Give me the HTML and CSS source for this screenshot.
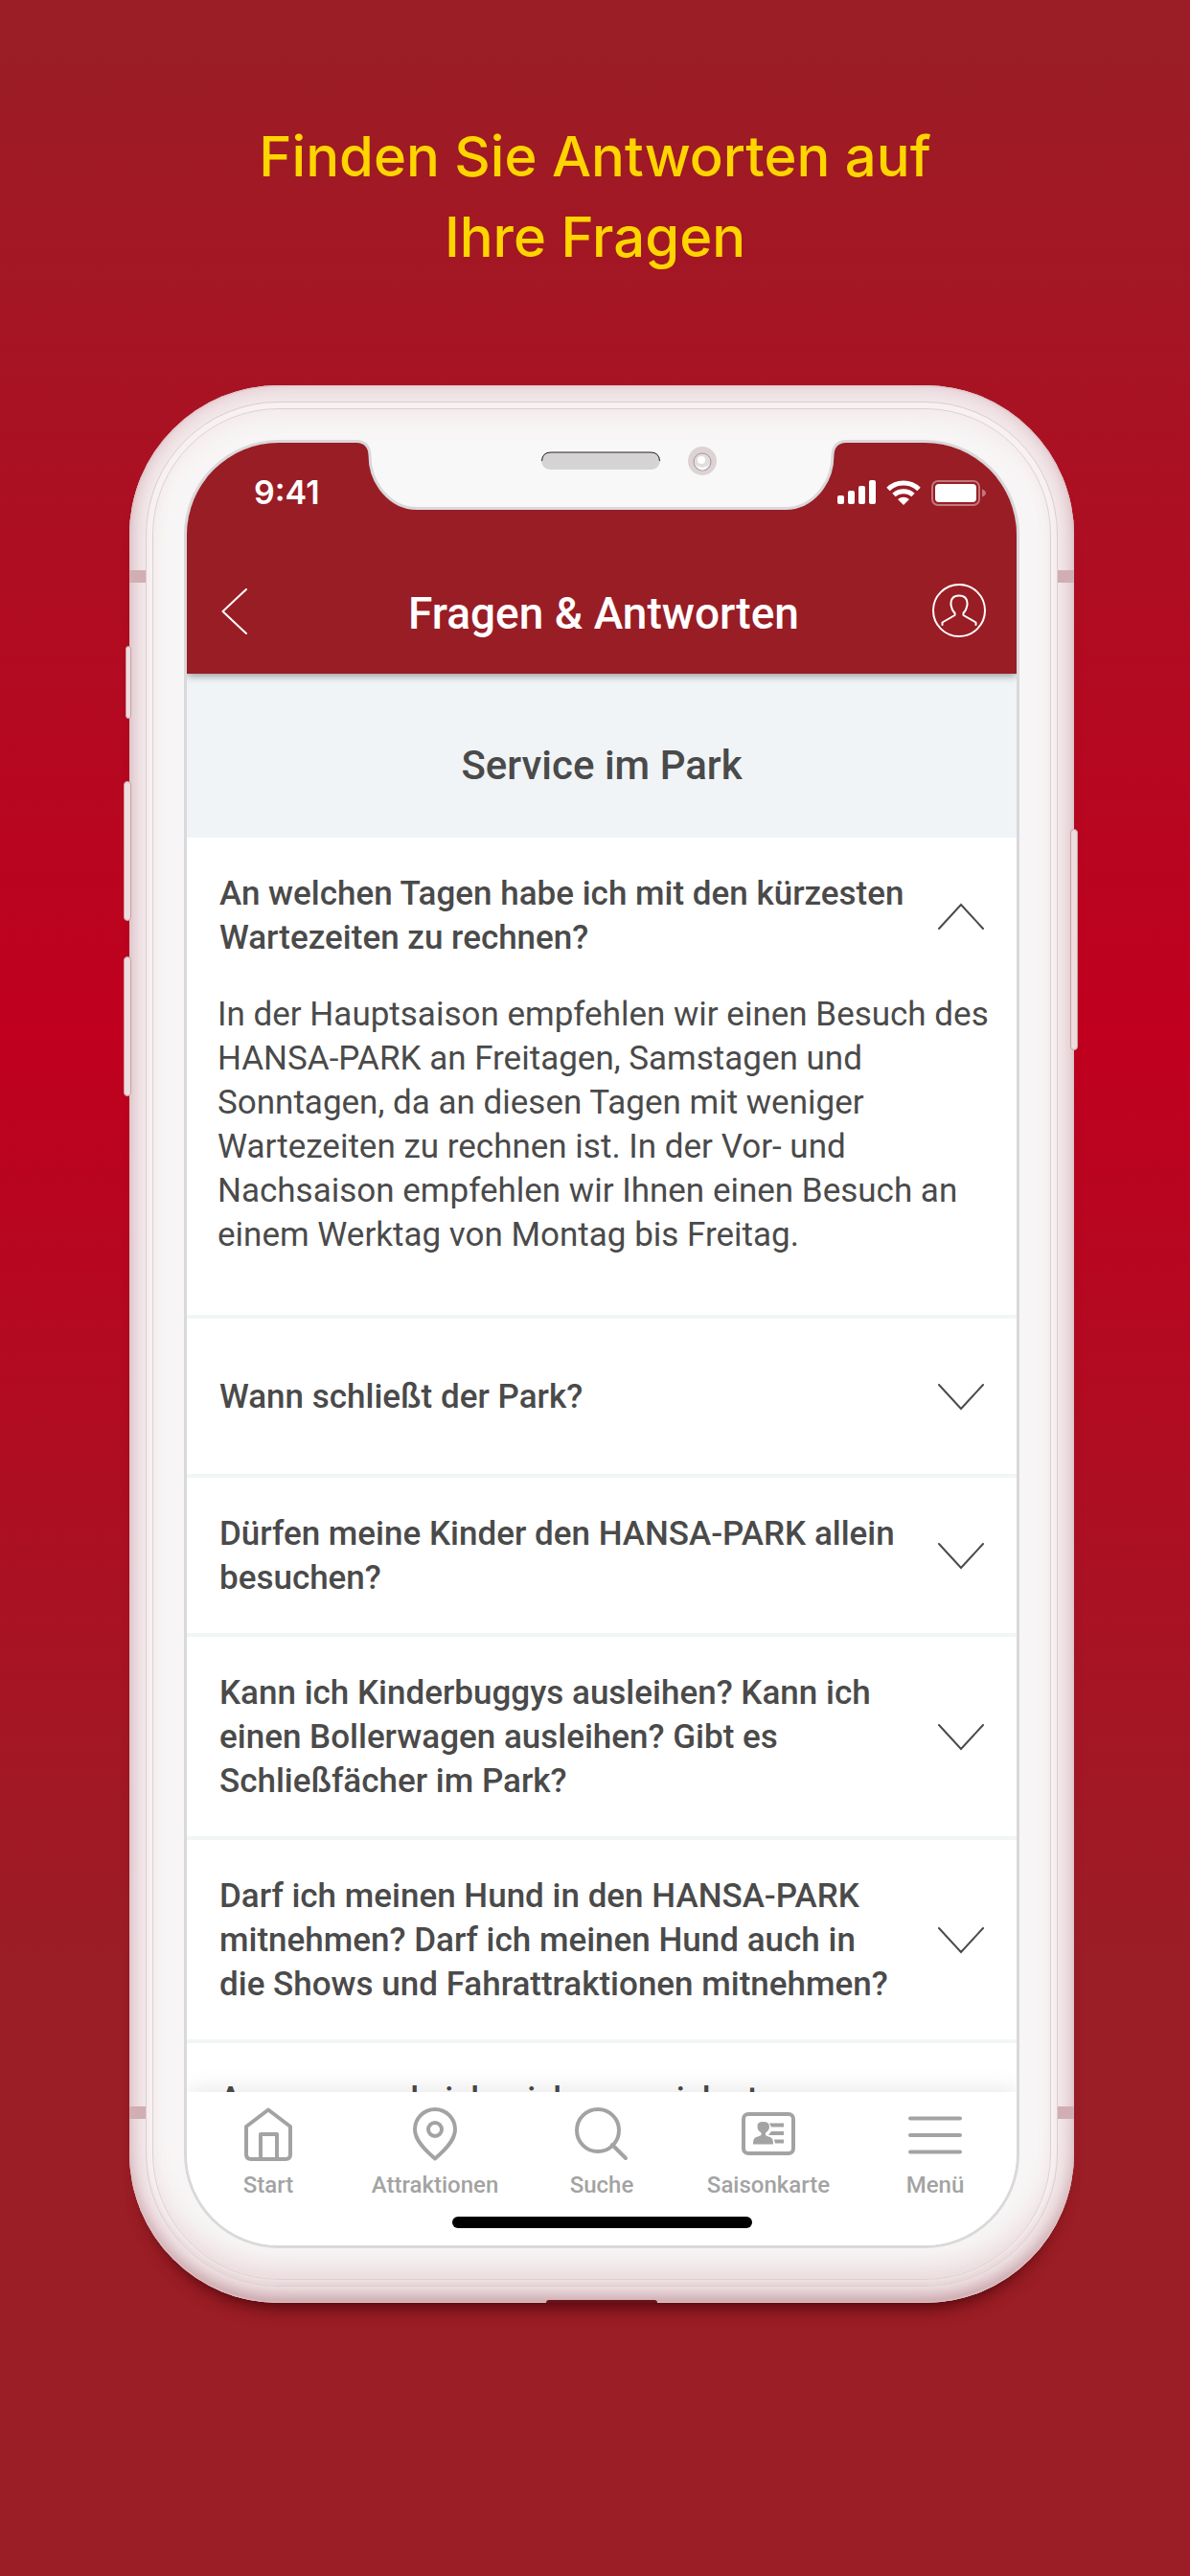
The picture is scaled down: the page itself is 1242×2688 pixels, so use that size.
FILE: index.html
```html
<!DOCTYPE html>
<html lang="de">
<head>
    <meta charset="UTF-8">
    <meta name="viewport" content="width=device-width, initial-scale=1">
    <title>Fragen &amp; Antworten</title>
    <link rel="stylesheet" href="styles.css">
</head>
<body>
    <h1 class="claim">Finden Sie Antworten auf<br>Ihre Fragen</h1>

    <main class="stage">
        <div class="phone">
            <!-- side keys -->
            <span class="key key_mute"></span>
            <span class="key key_up"></span>
            <span class="key key_down"></span>
            <span class="key key_power"></span>
            <!-- antenna bands -->
            <span class="band band_tl"></span>
            <span class="band band_tr"></span>
            <span class="band band_bl"></span>
            <span class="band band_br"></span>
            <span class="groove"></span>

            <div class="rim">
                <div class="bezel">
                    <div class="screen">
                        <header class="header">
                            <div class="status">
                                <span class="clock">9:41</span>
                                <span class="signals">
                                    <svg width="40" height="26" viewBox="0 0 40 26" fill="#fff">
                                        <rect x="0" y="16" width="7" height="9" rx="2"/>
                                        <rect x="11" y="11" width="7" height="14" rx="2"/>
                                        <rect x="22" y="6" width="7" height="19" rx="2"/>
                                        <rect x="33" y="0" width="7" height="25" rx="2"/>
                                    </svg>
                                    <svg width="36" height="26" viewBox="0 0 36 26" fill="none" stroke="#fff" stroke-width="5">
                                        <path d="M2 9.5A23 23 0 0 1 34 9.5"/>
                                        <path d="M8 15.5A15 15 0 0 1 28 15.5"/>
                                        <path d="M12 20Q18 15.500 24 20L18 26Z" fill="#fff" stroke="none"/>
                                    </svg>
                                    <svg width="57" height="27" viewBox="0 0 57 27">
                                        <rect x="1" y="1" width="49" height="25" rx="6" fill="none" stroke="#fff" stroke-opacity=".4" stroke-width="2"/>
                                        <rect x="4" y="4" width="43" height="19" rx="4" fill="#fff"/>
                                        <path d="M53 9.500Q57 11 57 13.500Q57 16 53 17.500Z" fill="#fff" fill-opacity=".4"/>
                                    </svg>
                                </span>
                            </div>
                            <div class="bar">
                                <button type="button" class="icon_btn" aria-label="Zurück">
                                    <svg width="28" height="50" viewBox="0 0 28 50" fill="none" stroke="#fff" stroke-width="2" stroke-linecap="round" stroke-linejoin="round">
                                        <path d="M26 3L1.500 26L26 49"/>
                                    </svg>
                                </button>
                                <h2 class="bar_title">Fragen &amp; Antworten</h2>
                                <button type="button" class="icon_btn" aria-label="Profil">
                                    <svg width="56" height="56" viewBox="0 0 56 56" fill="none" stroke="#fff" stroke-width="2" stroke-linecap="round" stroke-linejoin="round">
                                        <circle cx="28" cy="28" r="27"/>
                                        <path d="M10.500 43V40.500L23.500 33V30.500C20.500 28 20 25 19.500 22C19 16 22 12.500 28 12.500S37 16 36.500 22C36 25 35.500 28 32.500 30.500V33L45.500 40.500V43"/>
                                    </svg>
                                </button>
                            </div>
                        </header>

                        <div class="content">
                            <h3 class="section_title">Service im Park</h3>

                            <details class="faq" open>
                                <summary>
                                    <span class="question">An welchen Tagen habe ich mit den kürzesten Wartezeiten zu rechnen?</span>
                                    <svg class="chevron" width="48" height="28" viewBox="0 0 48 28"><path d="M1 1L24 26L47 1"/></svg>
                                </summary>
                                <p class="answer">In der Hauptsaison empfehlen wir einen Besuch des HANSA-PARK an Freitagen, Samstagen und Sonntagen, da an diesen Tagen mit weniger Wartezeiten zu rechnen ist. In der Vor- und Nachsaison empfehlen wir Ihnen einen Besuch an einem Werktag von Montag bis Freitag.</p>
                            </details>
                            <details class="faq">
                                <summary>
                                    <span class="question">Wann schließt der Park?</span>
                                    <svg class="chevron" width="48" height="28" viewBox="0 0 48 28"><path d="M1 1L24 26L47 1"/></svg>
                                </summary>
                            </details>
                            <details class="faq">
                                <summary>
                                    <span class="question">Dürfen meine Kinder den HANSA-PARK allein besuchen?</span>
                                    <svg class="chevron" width="48" height="28" viewBox="0 0 48 28"><path d="M1 1L24 26L47 1"/></svg>
                                </summary>
                            </details>
                            <details class="faq">
                                <summary>
                                    <span class="question">Kann ich Kinderbuggys ausleihen? Kann ich einen Bollerwagen ausleihen? Gibt es Schließfächer im Park?</span>
                                    <svg class="chevron" width="48" height="28" viewBox="0 0 48 28"><path d="M1 1L24 26L47 1"/></svg>
                                </summary>
                            </details>
                            <details class="faq">
                                <summary>
                                    <span class="question">Darf ich meinen Hund in den HANSA-PARK mitnehmen? Darf ich meinen Hund auch in die Shows und Fahrattraktionen mitnehmen?</span>
                                    <svg class="chevron" width="48" height="28" viewBox="0 0 48 28"><path d="M1 1L24 26L47 1"/></svg>
                                </summary>
                            </details>
                            <details class="faq">
                                <summary>
                                    <span class="question">An wen wende ich mich, wenn ich etwas verloren habe?</span>
                                    <svg class="chevron" width="48" height="28" viewBox="0 0 48 28"><path d="M1 1L24 26L47 1"/></svg>
                                </summary>
                            </details>
                        </div>

                        <footer class="footer">
                            <nav class="tabs">
                                <a href="#start">
                                    <svg width="56" height="56" viewBox="0 0 56 56">
                                        <path d="M28 2.500L51 20V49Q51 54 46 54H10Q5 54 5 49V20Z"/>
                                        <path d="M20 54V28H37V54"/>
                                    </svg>
                                    Start
                                </a>
                                <a href="#attraktionen">
                                    <svg width="56" height="56" viewBox="0 0 56 56">
                                        <path d="M28 53.500C18 45 7 34.500 7 23A21 21 0 0 1 49 23C49 34.500 38 45 28 53.500Z"/>
                                        <circle cx="28" cy="23" r="7"/>
                                    </svg>
                                    Attraktionen
                                </a>
                                <a href="#suche">
                                    <svg width="56" height="56" viewBox="0 0 56 56">
                                        <circle cx="24" cy="24" r="22"/>
                                        <path d="M39 39L53 53"/>
                                    </svg>
                                    Suche
                                </a>
                                <a href="#saisonkarte">
                                    <svg width="56" height="56" viewBox="0 0 56 56">
                                        <rect x="2" y="7" width="52" height="41" rx="5"/>
                                        <path class="solid" d="M12 38.500Q11.500 31 17 30.500L20.500 29V26.500Q16.500 24 16.500 20Q16 15 22.500 15T29 20Q29 24 25 26.500V29L28 30.500Q33.500 31 33 38.500Z"/>
                                        <path class="solid" d="M29 16.500H44V20.500H31ZM31 25H44V29H28ZM34 33.500H44V37.500H35Z"/>
                                    </svg>
                                    Saisonkarte
                                </a>
                                <a href="#menue">
                                    <svg width="56" height="56" viewBox="0 0 56 56">
                                        <path d="M2 11.500H54M2 29H54M2 46.500H54"/>
                                    </svg>
                                    Menü
                                </a>
                            </nav>
                            <div class="home_bar"></div>
                        </footer>
                    </div>

                    <svg class="notch" width="512" height="76" viewBox="0 0 512 76">
                        <path d="M1 1.500Q13.500 3 14 16C14 46 36 71.500 63 71.500H448C475 71.500 497 46 497 16Q497.500 3 510 1.500V-3H1Z" fill="#f9f8f8"/>
                        <path d="M0 1.500Q13.500 2 14 16C14 46 36 71.500 63 71.500H448C475 71.500 497 46 497 16Q497.500 2 511 1.500" fill="none" stroke="#d9d8da" stroke-width="3"/>
                        <!-- speaker -->
                        <rect x="193" y="13" width="124" height="18" rx="9" fill="#d6d3d4"/>
                        <path d="M193.500 22Q194 13 203 13H307Q316 13 316.500 22" fill="none" stroke="#222" stroke-width="1"/>
                        <!-- camera -->
                        <circle cx="361" cy="22" r="15" fill="#ddd2d4"/>
                        <circle cx="361" cy="23" r="9" fill="#e3dddd" stroke="#a39799" stroke-width="1"/>
                        <circle cx="360" cy="21" r="4" fill="#fff"/>
                        <path d="M354 26Q361 32 368 26Q361 37 354 26Z" fill="#fff"/>
                    </svg>
                </div>
            </div>
        </div>
    </main>
</body>
</html>
```

FILE: styles.css
```css
*{
    margin: 0;
    padding: 0;
    box-sizing: border-box;
}
body{
    min-height: 100vh;
    background: linear-gradient(#9b1d25 2%, #c0001e 40%, #9b1d25 76%);
    font-family: Roboto, "Liberation Sans", sans-serif;
    color: #4a4a4a;
}
a{
    text-decoration: none;
}
button{
    border: none;
    background: none;
}
svg{
    display: block;
}
.claim{
    padding: 121px 40px 113px;
    font: 500 58px/84px Inter, "Liberation Sans", sans-serif;
    text-align: center;
    color: #ffd500;
}
.stage{
    padding: 0 121px 120px 135px;
}

/* device */
.phone{
    position: relative;
    padding: 17px;
    border-radius: 156px;
    background: #f3e9eb;
    box-shadow: 0 18px 20px -16px #3c0006,
        inset 0 0 1px 1px #dcc3c7,
        inset 0 -12px 20px -6px #c39ba0,
        inset 0 0 20px 2px #e2c8cd;
}
.rim{
    padding: 6px;
    border: 1px solid #dacdd0;
    border-radius: 139px;
    background: #f7f1f2;
    box-shadow: inset 0 -10px 8px -4px #e6d3d6;
}
.bezel{
    position: relative;
    padding: 32px;
    border: 1px solid #ddd0d2;
    border-radius: 132px;
    background: #f7f5f5;
    box-shadow: inset 0 -20px 24px -8px #ead9db,
        inset 0 16px 20px -8px #f3e9ea,
        inset 0 0 24px #fdf9fa;
}
.key{
    position: absolute;
    left: -6px;
    width: 8px;
    height: 146px;
    border: 1px solid #c7a2a6;
    border-radius: 4px;
    background: #efdcdf;
}
.key_mute{
    top: 272px;
    left: -4px;
    width: 6px;
    height: 76px;
}
.key_up{
    top: 413px;
}
.key_down{
    top: 596px;
}
.key_power{
    top: 463px;
    right: -4px;
    left: auto;
    height: 231px;
}
.band{
    position: absolute;
    width: 17px;
    height: 13px;
    background: #d0aeb4;
}
.band_tl, .band_tr{
    top: 193px;
}
.band_bl, .band_br{
    bottom: 192px;
}
.band_tl, .band_bl{
    left: 0;
}
.band_tr, .band_br{
    right: 0;
}
.groove{
    position: absolute;
    bottom: 0;
    left: 50%;
    width: 116px;
    height: 3px;
    margin-left: -58px;
    border-radius: 12px 12px 0 0;
    background: #6a1218;
}
.notch{
    position: absolute;
    top: 32px;
    left: 50%;
    margin-left: -256px;
}
.screen{
    display: flex;
    flex-direction: column;
    aspect-ratio: 872 / 1887;
    overflow: hidden;
    border: 3px solid #d9d8da;
    border-radius: 99px;
    background: #fff;
}

/* header */
.header{
    position: relative;
    flex: none;
    padding: 36px 32px 36px 36px;
    background: #991d25;
    box-shadow: 0 2px 8px rgba(0, 0, 0, .4);
}
.status{
    display: flex;
    justify-content: space-between;
    align-items: center;
    height: 32px;
    padding-left: 34px;
}
.clock{
    font: 600 34px/32px Inter, "Liberation Sans", sans-serif;
    color: #fff;
}
.signals{
    display: flex;
    align-items: center;
    gap: 11px;
}
.bar{
    display: flex;
    justify-content: space-between;
    align-items: center;
    margin-top: 77px;
    height: 60px;
}
.icon_btn{
    display: flex;
    width: 56px;
}
.bar_title{
    padding-top: 6px;
    font-size: 46px;
    font-weight: 500;
    line-height: 60px;
    color: #fff;
}

/* questions */
.content{
    flex: 1;
    min-height: 0;
    overflow: hidden;
}
.section_title{
    padding: 66px 20px 46px;
    background: #f0f4f6;
    font-size: 42px;
    font-weight: 500;
    line-height: 59px;
    text-align: center;
}
.faq{
    border-bottom: 4px solid #f2f5f6;
}
.faq summary{
    display: flex;
    align-items: center;
    gap: 32px;
    min-height: 162px;
    padding: 36px 34px 34px;
    list-style: none;
    cursor: pointer;
}
.question{
    flex: 1;
    font-size: 35px;
    font-weight: 500;
    line-height: 46px;
}
.chevron{
    flex: none;
    fill: none;
    stroke: #4a4a4a;
    stroke-width: 2;
    stroke-linecap: round;
}
.faq[open] .chevron{
    transform: rotate(180deg);
}
.answer{
    padding: 0 24px 60px 32px;
    font-size: 35px;
    line-height: 46px;
}

/* tab bar */
.footer{
    position: relative;
    flex: none;
    padding: 16px 0 18px;
    background: #fff;
    box-shadow: 0 -2px 24px rgba(0, 0, 0, .1);
}
.tabs{
    display: grid;
    grid-template-columns: repeat(5, 1fr);
    margin: 0 -2px;
}
.tabs a{
    display: flex;
    flex-direction: column;
    align-items: center;
    gap: 12px;
    font-size: 24px;
    font-weight: 500;
    line-height: 26px;
    color: #a3a3a3;
}
.tabs svg{
    fill: none;
    stroke: #a3a3a3;
    stroke-width: 4;
    stroke-linecap: round;
    stroke-linejoin: round;
}
.tabs .solid{
    fill: #a3a3a3;
    stroke: none;
}
.home_bar{
    width: 313px;
    height: 12px;
    margin: 20px auto 0;
    border-radius: 6px;
    background: #000;
}
```
